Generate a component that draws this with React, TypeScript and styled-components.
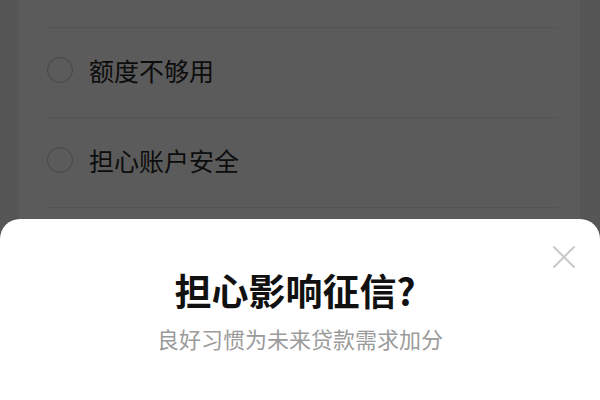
import styled, { createGlobalStyle } from "styled-components";

const GlobalStyle = createGlobalStyle`
  html, body, #root {
    margin: 0;
    height: 100%;
  }
  body {
    background: #f0f0f0;
    font-family: "Noto Sans CJK SC", "Noto Sans", sans-serif;
    overflow: hidden;
  }
`;

const options = ["额度不够用", "担心账户安全", "其他原因"];

export default function App() {
  return (
    <>
      <GlobalStyle />
      <Page>
        <Card>
          {options.map((label) => (
            <Option key={label}>
              <Radio />
              <OptionLabel>{label}</OptionLabel>
            </Option>
          ))}
        </Card>
        <Mask />
        <Sheet>
          <CloseButton aria-label="关闭">
            <svg width="22" height="22" viewBox="0 0 22 22">
              <path d="M1 1 L21 21 M21 1 L1 21" stroke="#c9c9c9" strokeWidth="2" strokeLinecap="round" />
            </svg>
          </CloseButton>
          <Title>担心影响征信?</Title>
          <Subtitle>良好习惯为未来贷款需求加分</Subtitle>
        </Sheet>
      </Page>
    </>
  );
}

const Page = styled.div`
  position: relative;
  height: 100%;
  overflow: hidden;
`;

const Card = styled.div`
  margin: 0 20px 0 18px;
  padding: 27px 22px 0 29px;
  background: #fff;
  height: 100%;
  box-sizing: border-box;
`;

const Option = styled.div`
  display: flex;
  align-items: center;
  gap: 16px;
  height: 90px;
  box-sizing: border-box;
  border-top: 1px solid #ececec;
  padding-bottom: 5px;
`;

const Radio = styled.span`
  width: 26px;
  height: 26px;
  box-sizing: border-box;
  border: 1.5px solid #c4c4c4;
  border-radius: 50%;
  flex-shrink: 0;
`;

const OptionLabel = styled.span`
  font-size: 25px;
  color: #262626;
  line-height: 1;
`;

const Mask = styled.div`
  position: absolute;
  inset: 0;
  background: rgba(0, 0, 0, 0.645);
`;

const Sheet = styled.div`
  position: absolute;
  left: 0;
  right: 0;
  top: 219px;
  bottom: 0;
  background: #fff;
  border-radius: 20px 20px 0 0;
  display: flex;
  flex-direction: column;
  align-items: center;
  padding-top: 49px;
  box-sizing: border-box;
`;

const CloseButton = styled.button`
  position: absolute;
  top: 27px;
  right: 25px;
  padding: 0;
  border: 0;
  background: none;
  display: flex;
`;

const Title = styled.h2`
  margin: 0 10px 0 0;
  font-size: 37px;
  font-weight: 700;
  line-height: 44px;
  color: #111;
`;

const Subtitle = styled.p`
  margin: 10px 0 0;
  font-size: 22px;
  line-height: 32px;
  color: #9b9b9b;
`;
